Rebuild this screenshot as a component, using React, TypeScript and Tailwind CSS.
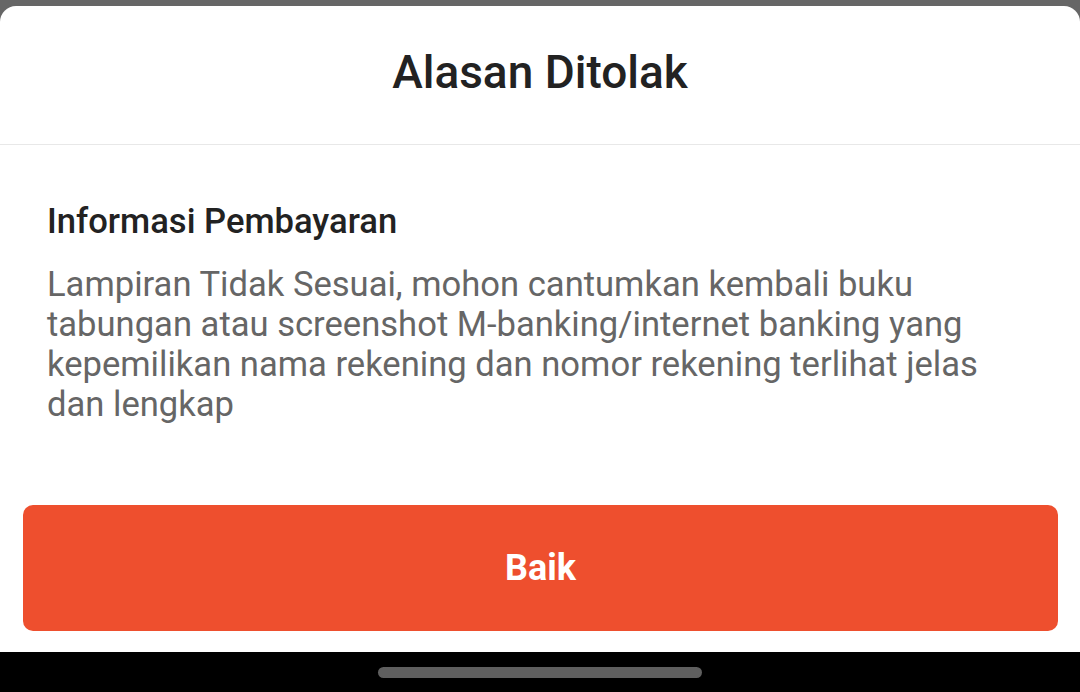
import React from "react";

export default function App() {
  return (
    <div className="w-[1080px] h-[692px] bg-[#666666] flex flex-col overflow-hidden" style={{ fontFamily: "Roboto, 'Noto Sans', sans-serif" }}>
      <div className="h-[6px] shrink-0" />
      <div className="flex-1 bg-white rounded-t-[16px] flex flex-col">
        <div className="h-[139px] shrink-0 flex items-center justify-center border-b border-[#e8e8e8]">
          <h1 className="text-[46px] font-medium text-[#222222] leading-none -mt-[6px]">Alasan Ditolak</h1>
        </div>
        <div className="pl-[47px] pr-[40px] pt-[56px]">
          <h2 className="text-[34.6px] font-medium text-[#222222] leading-[40px]">Informasi Pembayaran</h2>
          <p className="mt-[23px] text-[34.6px] text-[#666666] leading-[40px]">
            Lampiran Tidak Sesuai, mohon cantumkan kembali buku tabungan atau screenshot M-banking/internet banking yang kepemilikan nama rekening dan nomor rekening terlihat jelas dan lengkap
          </p>
        </div>
        <div className="flex-1" />
        <div className="pl-[23px] pr-[22px] pb-[21px]">
          <button className="w-full h-[126px] rounded-[10px] bg-[#ee4f2e] text-white text-[36px] font-bold flex items-center justify-center">
            Baik
          </button>
        </div>
      </div>
      <div className="h-[40px] shrink-0 bg-black flex items-center justify-center">
        <div className="w-[324px] h-[11px] rounded-full bg-[#5f5f5f]" />
      </div>
    </div>
  );
}
